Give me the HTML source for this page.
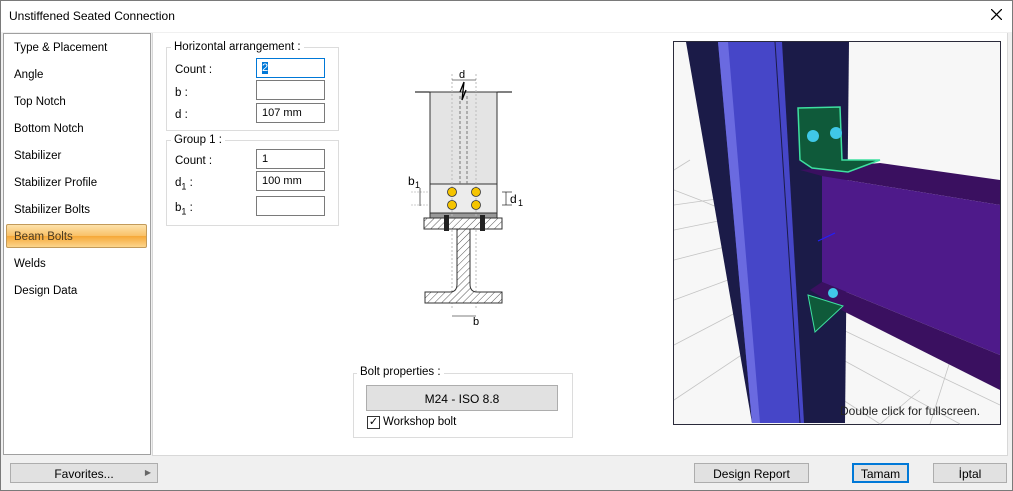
<!DOCTYPE html>
<html><head><style>
*{box-sizing:border-box;margin:0;padding:0}
body{width:1013px;height:491px;overflow:hidden;background:#fff;font-family:"Liberation Sans",sans-serif;font-size:12px;color:#000;position:relative}
.a{position:absolute}
.win{left:0;top:0;width:1013px;height:491px;border:1px solid #7a7a7a;background:#f0f0f0}
.nav{left:3px;top:33px;width:148px;height:422px;background:#fff;border:1px solid #a0a0a0}
.nav div{position:absolute;left:10px;font-size:11.5px}
.main{left:152px;top:33px;width:856px;height:423px;background:#fff;border-left:1px solid #d8d8d8;border-right:1px solid #d8d8d8;border-bottom:1px solid #d8d8d8}
.grp{border:1px solid #dcdcdc}
.gl{background:#fff;padding:0 3px;font-size:11.5px}
.lb{font-size:11.5px}
.inp{border:1px solid #7a7a7a;background:#fff;width:69px;height:20px;font-size:11px;padding:3px 0 0 5px}
.btn{background:#e1e1e1;border:1px solid #adadad;text-align:center;font-size:12px}
</style></head><body>
<div class="a win"></div>
<div class="a" style="left:1px;top:1px;width:1011px;height:31px;background:#fff"></div>
<div class="a" style="left:9px;top:9px;font-size:12px">Unstiffened Seated Connection</div>
<svg class="a" style="left:991px;top:9px" width="11" height="11"><path d="M0 0L11 11M11 0L0 11" stroke="#000" stroke-width="1.3"/></svg>
<div class="a nav">
<div style="top:8px">Type &amp; Placement</div>
<div style="top:35px">Angle</div>
<div style="top:62px">Top Notch</div>
<div style="top:89px">Bottom Notch</div>
<div style="top:116px">Stabilizer</div>
<div style="top:143px">Stabilizer Profile</div>
<div style="top:170px">Stabilizer Bolts</div>
<div style="top:190px;left:2px;width:141px;height:24px;border:1px solid #c29a5a;border-radius:2px;background:linear-gradient(#fde2ab,#f9c066 50%,#f6a838 51%,#fcd58c)"></div>
<div style="top:197px;color:#4a3a20">Beam Bolts</div>
<div style="top:224px">Welds</div>
<div style="top:251px">Design Data</div>
</div>
<div class="a main"></div>
<div class="a grp" style="left:166px;top:47px;width:173px;height:84px"></div>
<div class="a gl" style="left:171px;top:41px">Horizontal arrangement :</div>
<div class="a lb" style="left:175px;top:64px">Count :</div>
<div class="a lb" style="left:175px;top:87px">b :</div>
<div class="a lb" style="left:175px;top:109px">d :</div>
<div class="a inp" style="left:256px;top:58px;border:1px solid #0078d7"><span style="background:#0078d7;color:#fff">2</span></div>
<div class="a inp" style="left:256px;top:80px"></div>
<div class="a inp" style="left:256px;top:103px">107 mm</div>
<div class="a grp" style="left:166px;top:140px;width:173px;height:86px"></div>
<div class="a gl" style="left:171px;top:134px">Group 1 :</div>
<div class="a lb" style="left:175px;top:155px">Count :</div>
<div class="a lb" style="left:175px;top:177px">d<sub style="font-size:9px">1</sub> :</div>
<div class="a lb" style="left:175px;top:202px">b<sub style="font-size:9px">1</sub> :</div>
<div class="a inp" style="left:256px;top:149px">1</div>
<div class="a inp" style="left:256px;top:171px">100 mm</div>
<div class="a inp" style="left:256px;top:196px"></div>
<svg class="a" style="left:380px;top:60px" width="160" height="270" viewBox="0 0 160 270">
<defs><pattern id="h" width="5" height="5" patternUnits="userSpaceOnUse" patternTransform="rotate(45)"><rect width="5" height="5" fill="#fff"/><line x1="0" y1="0" x2="0" y2="5" stroke="#555" stroke-width="1"/></pattern></defs>
<line x1="35" y1="32" x2="132" y2="32" stroke="#000"/>
<rect x="50" y="32" width="67" height="95" fill="#e4e4e4" stroke="#333"/>
<rect x="50" y="124" width="67" height="33" fill="#ececec" stroke="#333"/>
<rect x="50" y="153" width="67" height="5" fill="#999" stroke="#333"/>
<path d="M80 32 L84 22 L82 40 L86 30" fill="none" stroke="#000" stroke-width="1.3"/>
<line x1="80" y1="36" x2="80" y2="124" stroke="#777" stroke-dasharray="3,2"/>
<line x1="87" y1="36" x2="87" y2="124" stroke="#777" stroke-dasharray="3,2"/>
<line x1="72" y1="14" x2="72" y2="250" stroke="#bbb" stroke-dasharray="2,2"/>
<line x1="96" y1="14" x2="96" y2="250" stroke="#bbb" stroke-dasharray="2,2"/>
<line x1="72" y1="20" x2="96" y2="20" stroke="#000" stroke-width=".6"/>
<text x="79" y="18" font-size="11" font-family="Liberation Sans">d</text>
<g fill="#f5c400" stroke="#333" stroke-width=".8"><circle cx="72" cy="132" r="4.5"/><circle cx="96" cy="132" r="4.5"/><circle cx="72" cy="145" r="4.5"/><circle cx="96" cy="145" r="4.5"/></g>
<rect x="44" y="158" width="78" height="11" fill="url(#h)" stroke="#333"/>
<rect x="64" y="155" width="5" height="16" fill="#222"/><rect x="100" y="155" width="5" height="16" fill="#222"/>
<path d="M77 169 L77 224 Q77 232 70 232 L45 232 L45 243 L122 243 L122 232 L97 232 Q90 232 90 224 L90 169 Z" fill="url(#h)" stroke="#333"/>
<line x1="122" y1="132" x2="132" y2="132" stroke="#000" stroke-width=".6"/><line x1="122" y1="145" x2="132" y2="145" stroke="#000" stroke-width=".6"/><line x1="126" y1="132" x2="126" y2="145" stroke="#000" stroke-width=".6"/>
<text x="130" y="143" font-size="12" font-family="Liberation Sans">d</text><text x="138" y="146" font-size="9" font-family="Liberation Sans">1</text>
<line x1="31" y1="132" x2="48" y2="132" stroke="#999" stroke-width=".6" stroke-dasharray="2,1"/><line x1="31" y1="145" x2="48" y2="145" stroke="#999" stroke-width=".6" stroke-dasharray="2,1"/><line x1="40" y1="128" x2="40" y2="146" stroke="#000" stroke-width=".6"/>
<text x="28" y="125" font-size="12" font-family="Liberation Sans">b</text><text x="35" y="128" font-size="9" font-family="Liberation Sans">1</text>
<line x1="72" y1="256" x2="96" y2="256" stroke="#000" stroke-width=".6"/>
<text x="93" y="265" font-size="11" font-family="Liberation Sans">b</text>
</svg>
<div class="a grp" style="left:353px;top:373px;width:220px;height:65px"></div>
<div class="a gl" style="left:357px;top:366px">Bolt properties :</div>
<div class="a btn" style="left:366px;top:385px;width:192px;height:26px;padding-top:6px">M24 - ISO 8.8</div>
<div class="a" style="left:367px;top:416px;width:13px;height:13px;border:1px solid #333;background:#fff;font-size:11px;line-height:11px;text-align:center">✓</div>
<div class="a lb" style="left:383px;top:416px">Workshop bolt</div>
<svg class="a" style="left:673px;top:41px" width="328" height="384" viewBox="673 41 328 384">
<rect x="673" y="41" width="328" height="384" fill="#f7f7f7" stroke="#2a2a3a" stroke-width="2"/>
<g stroke="#c4c4c4" stroke-width=".8" fill="none">
<path d="M674 205 L745 195 M674 230 L748 215 M674 260 L752 240 M674 300 L755 270 M674 345 L760 300 M674 400 L764 340 M690 160 L674 170 M674 190 L700 200 L760 225"/>
<path d="M843 330 L1000 405 M843 360 L960 424 M880 424 L920 390 M843 400 L880 424 M960 330 L930 424 M843 305 L1000 380"/>
</g>
<polygon points="686,42 849,42 845,423 752,423" fill="#1b1b48"/>
<polygon points="718,42 782,42 804,423 752,423" fill="#4646c8"/>
<polygon points="718,42 728,42 760,423 752,423" fill="#6a6ae0"/>
<line x1="775" y1="42" x2="800" y2="423" stroke="#1b1b48" stroke-width="1"/>
<polygon points="800,170 880,163 1000,180 1000,205 822,176" fill="#3a1060"/>
<polygon points="822,176 1000,205 1000,355 822,282" fill="#4e1a8a"/>
<polygon points="810,290 822,282 1000,355 1000,390 845,312" fill="#3a1060"/>
<polygon points="798,108 840,107 842,160 880,160 848,172 812,168 800,160" fill="#0f5a3a" stroke="#3ee0a0" stroke-width="1.5"/>
<circle cx="813" cy="136" r="6" fill="#40c8e8"/><circle cx="836" cy="133" r="6" fill="#40c8e8"/>
<polygon points="808,295 843,306 815,332" fill="#0f5a3a" stroke="#3ee0a0" stroke-width="1"/>
<circle cx="833" cy="293" r="5" fill="#40c8e8"/>
<line x1="818" y1="241" x2="835" y2="233" stroke="#2020ff"/>
<text x="840" y="415" font-size="12" fill="#222" font-family="Liberation Sans">Double click for fullscreen.</text>
</svg>
<div class="a btn" style="left:10px;top:463px;width:148px;height:20px;padding-top:3px">Favorites...<span style="position:absolute;right:6px;top:4px;font-size:8px;color:#666">▶</span></div>
<div class="a btn" style="left:694px;top:463px;width:115px;height:20px;padding-top:3px">Design Report</div>
<div class="a btn" style="left:852px;top:463px;width:57px;height:20px;padding-top:2px;border:2px solid #0078d7">Tamam</div>
<div class="a btn" style="left:933px;top:463px;width:74px;height:20px;padding-top:3px">İptal</div>
</body></html>
